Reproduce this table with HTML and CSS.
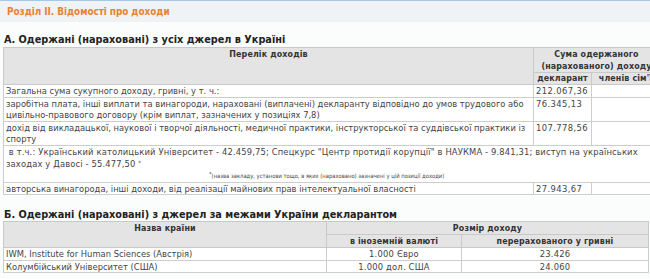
FILE: index.html
```html
<!DOCTYPE html>
<html lang="uk">
<head>
<meta charset="utf-8">
<title>Розділ ІІ. Відомості про доходи</title>
<link rel="stylesheet" href="styles.css">
</head>
<body>
<div class="section-head">Розділ ІІ. Відомості про доходи</div>
<div class="content">
  <h3 class="sub sub-a">А. Одержані (нараховані) з усіх джерел в Україні</h3>
  <table class="tbl tbl-a">
    <colgroup><col class="a-name"><col class="a-decl"><col class="a-fam"></colgroup>
    <thead>
      <tr class="hr1"><th rowspan="2" class="th-top">Перелік доходів</th><th colspan="2">Сума одержаного<br>(нарахованого) доходу</th></tr>
      <tr class="hr2"><th>декларант</th><th>членів сім'ї</th></tr>
    </thead>
    <tbody>
      <tr><td>Загальна сума сукупного доходу, гривні, у т. ч.:</td><td class="amt">212.067,36</td><td></td></tr>
      <tr><td>заробітна плата, інші виплати та винагороди, нараховані (виплачені) декларанту відповідно до умов трудового або цивільно-правового договору (крім виплат, зазначених у позиціях 7,8)</td><td class="amt">76.345,13</td><td></td></tr>
      <tr><td>дохід від викладацької, наукової і творчої діяльності, медичної практики, інструкторської та суддівської практики із спорту</td><td class="amt">107.778,56</td><td></td></tr>
      <tr><td colspan="3" class="detail"><div class="detail-text">&nbsp;в т.ч.: Український католицький Університет - 42.459,75; Спецкурс "Центр протидії корупції" в НАУКМА - 9.841,31; виступ на українських заходах у Давосі - 55.477,50 <span class="star">*</span></div><div class="foot"><span class="fstar">*</span>(назва закладу, установи тощо, в яких (нараховано) зазначені у цій позиції доходи)</div></td></tr>
      <tr><td>авторська винагорода, інші доходи, від реалізації майнових прав інтелектуальної власності</td><td class="amt">27.943,67</td><td></td></tr>
    </tbody>
  </table>

  <h3 class="sub sub-b">Б. Одержані (нараховані) з джерел за межами України декларантом</h3>
  <table class="tbl tbl-b">
    <colgroup><col class="b-name"><col class="b-cur"><col class="b-uah"></colgroup>
    <thead>
      <tr><th rowspan="2" class="th-top">Назва країни</th><th colspan="2">Розмір доходу</th></tr>
      <tr><th>в іноземній валюті</th><th>перерахованого у гривні</th></tr>
    </thead>
    <tbody>
      <tr><td>IWM, Institute for Human Sciences (Австрія)</td><td class="num">1.000 Євро</td><td class="num">23.426</td></tr>
      <tr><td>Колумбійський Університет (США)</td><td class="num">1.000 дол. США</td><td class="num">24.060</td></tr>
    </tbody>
  </table>
</div>
</body>
</html>
```

FILE: styles.css
```css
html, body {
  margin: 0;
  padding: 0;
  background: #fbfcfc;
  overflow: hidden;
}

body {
  font-family: "DejaVu Sans Condensed", "Liberation Sans", sans-serif;
  font-size: 9.3px;
  color: #444;
}

.section-head {
  border-top: 1px solid #a9c6e4;
  background: #eff3f6;
  height: 21px;
  line-height: 22px;
  padding-left: 7px;
  color: #e7822f;
  font-weight: bold;
  font-size: 9.8px;
}

.content {
  padding: 0 0 0 3px;
}

.sub {
  margin: 0;
  font-size: 10.8px;
  font-weight: bold;
  line-height: 13px;
  color: #222;
  padding-left: 1px;
}

.sub-a {
  margin-top: 11px;
  margin-bottom: 1px;
}

.sub-b {
  margin-top: 13px;
  margin-bottom: 0;
}

.tbl {
  border-collapse: collapse;
  table-layout: fixed;
}

.tbl-a {
  width: 656px;
}

.tbl-b {
  width: 645px;
}

.a-name { width: 530px; }
.a-decl { width: 58px; }
.a-fam { width: 68px; }

.b-name { width: 323px; }
.b-cur { width: 135px; }
.b-uah { width: 187px; }

.tbl th {
  background: #e4e4e4;
  border: 1px solid #c9c9c9;
  color: #333;
  font-size: 8.8px;
  font-weight: bold;
  letter-spacing: 0.15px;
  padding: 0 2px;
  line-height: 12px;
  text-align: center;
  vertical-align: top;
  white-space: nowrap;
  overflow: hidden;
}

.tbl-a .hr2 th {
  line-height: 11px;
}

.tbl td {
  background: #fff;
  border: 1px solid #cdcdcd;
  padding: 0 2px;
  line-height: 11.5px;
  vertical-align: top;
}

.tbl td.amt {
  letter-spacing: 0.4px;
}

.tbl td.num {
  text-align: center;
  letter-spacing: 0.2px;
}

.detail-text {
  line-height: 12px;
  letter-spacing: 0.15px;
  padding-right: 8px;
}

.star {
  font-size: 6px;
  vertical-align: top;
  line-height: 9px;
}

.foot {
  font-size: 5.8px;
  line-height: 12px;
  padding-left: 203px;
}

.fstar {
  display: inline-block;
  vertical-align: top;
  line-height: 8px;
}
```
